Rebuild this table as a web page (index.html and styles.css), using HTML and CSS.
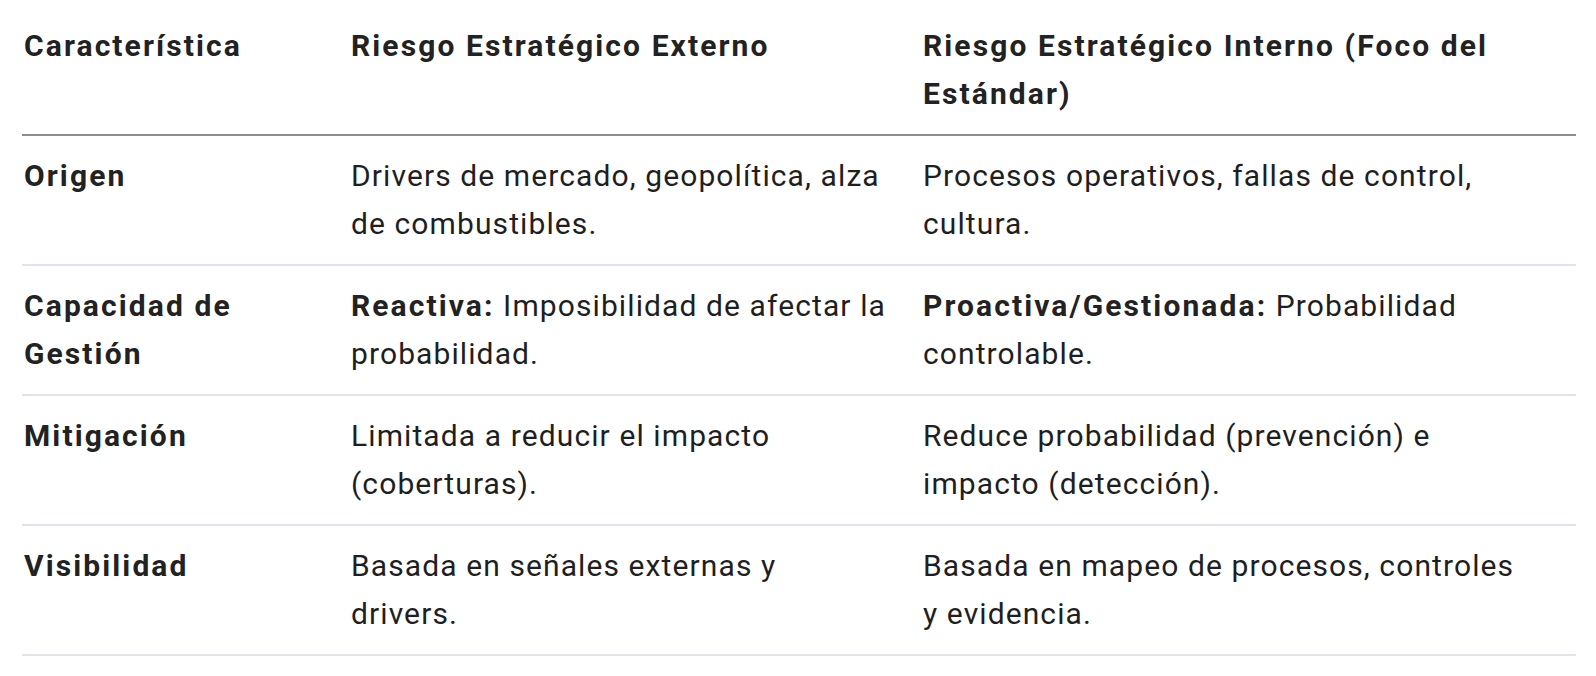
FILE: index.html
```html
<!DOCTYPE html>
<html lang="es">
<head>
<meta charset="utf-8">
<link rel="stylesheet" href="styles.css">
</head>
<body>
<div class="page">
<table class="cmp">
  <colgroup>
    <col class="c1"><col class="c2"><col class="c3">
  </colgroup>
  <thead>
    <tr>
      <th>Característica</th>
      <th>Riesgo Estratégico Externo</th>
      <th>Riesgo Estratégico Interno (Foco del Estándar)</th>
    </tr>
  </thead>
  <tbody>
    <tr>
      <td class="key">Origen</td>
      <td>Drivers de mercado, geopolítica, alza de combustibles.</td>
      <td>Procesos operativos, fallas de control, cultura.</td>
    </tr>
    <tr>
      <td class="key">Capacidad de Gestión</td>
      <td><strong>Reactiva:</strong> Imposibilidad de afectar la probabilidad.</td>
      <td><strong>Proactiva/Gestionada:</strong> Probabilidad controlable.</td>
    </tr>
    <tr>
      <td class="key">Mitigación</td>
      <td>Limitada a reducir el impacto (coberturas).</td>
      <td>Reduce probabilidad (prevención) e impacto (detección).</td>
    </tr>
    <tr>
      <td class="key">Visibilidad</td>
      <td>Basada en señales externas y drivers.</td>
      <td>Basada en mapeo de procesos, controles y evidencia.</td>
    </tr>
  </tbody>
</table>
</div>
</body>
</html>
```

FILE: styles.css
```css
html, body {
  margin: 0;
  padding: 0;
  background: #ffffff;
}

.page {
  padding: 6px 20px 0 22px;
  font-family: Roboto, "Liberation Sans", sans-serif;
  color: #1f1f1f;
}

.cmp {
  width: 1554px;
  border-collapse: collapse;
  table-layout: fixed;
  font-size: 30px;
  line-height: 48px;
  letter-spacing: 1.1px;
}

.c1 { width: 327px; }
.c2 { width: 572px; }
.c3 { width: 655px; }

.cmp th,
.cmp td {
  text-align: left;
  vertical-align: top;
  padding: 16px 34px 16px 2px;
}

.cmp th:last-child,
.cmp td:last-child {
  padding-right: 48px;
}

.cmp th {
  font-weight: 700;
  letter-spacing: 2.1px;
  color: #222222;
  border-bottom: 2px solid #8e8e8e;
}

.cmp td {
  font-weight: 400;
  border-bottom: 2px solid #dfe3eb;
}

.cmp td.key,
.cmp strong {
  font-weight: 700;
  letter-spacing: 2.1px;
  color: #222222;
}
```
